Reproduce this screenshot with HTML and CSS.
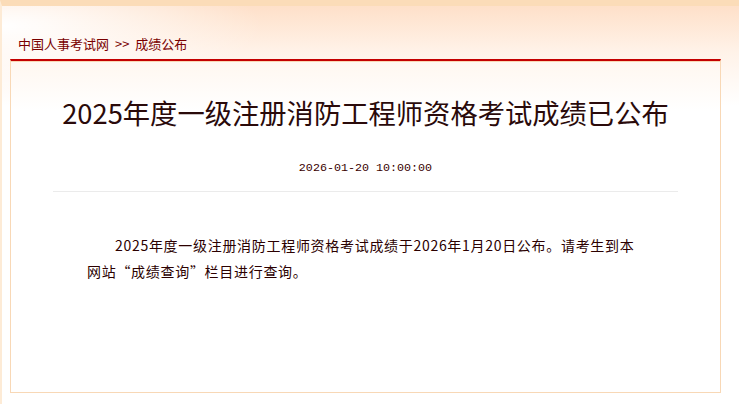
FILE: index.html
```html
<!DOCTYPE html>
<html lang="zh-CN">
<head>
    <meta charset="UTF-8">
    <meta name="viewport" content="width=device-width, initial-scale=1.0">
    <title>成绩公布 - 中国人事考试网</title>
    <link rel="stylesheet" href="styles.css">
</head>
<body>
    <div class="page">
        <div class="crumb">
            <a href="#">中国人事考试网</a>
            <span class="sep">&gt;&gt;</span>
            <a href="#">成绩公布</a>
        </div>

        <div class="box">
            <h1 class="title">2025年度一级注册消防工程师资格考试成绩已公布</h1>
            <div class="date">2026-01-20 10:00:00</div>

            <div class="content">
                <p>2025年度一级注册消防工程师资格考试成绩于2026年1月20日公布。请考生到本网站“成绩查询”栏目进行查询。</p>
            </div>
        </div>
    </div>
</body>
</html>
```

FILE: styles.css
```css
body {
    margin: 0;
    background: #fff;
    font-family: "Noto Sans CJK SC", "Liberation Sans", sans-serif;
    color: #2b0606;
}

.page {
    height: 398px;
    border-top: 6px solid #fbdcb8;
    border-left: 2px solid #fdebd6;
    padding: 0 18px 0 8px;
    background:
        radial-gradient(ellipse 260px 70px at 0 20px, #fff 0%, rgba(255, 255, 255, 0) 100%),
        linear-gradient(180deg, #fee0c9 0%, #fff2e8 45px, #fff 100px);
}

.crumb {
    padding: 28px 0 0 8px;
    height: 25px;
    font-size: 13px;
    line-height: 20px;
}

.crumb a {
    color: #7a0000;
    text-decoration: none;
}

.crumb .sep {
    color: #7a0000;
    margin: 0 3px;
}

.box {
    height: 334px;
    box-sizing: border-box;
    border: 1px solid #f8d8b6;
    border-top: 2px solid #c40000;
    box-shadow: inset 0 1px 0 #f8d8b6;
    background: linear-gradient(180deg, #fff7f0 0%, #fff 50px);
}

.title {
    margin: 0;
    padding-top: 31px;
    font-size: 27.3px;
    font-weight: normal;
    line-height: 40px;
    text-align: center;
    color: #2a0a0a;
}

.date {
    margin: 26px 42px 0;
    padding-bottom: 13px;
    border-bottom: 1px solid #ebebeb;
    font-family: "Liberation Mono", monospace;
    font-size: 11.7px;
    line-height: 20px;
    text-align: center;
    color: #3a0000;
}

.content {
    padding: 40px 76px 0;
}

.content p {
    margin: 0;
    font-size: 14px;
    line-height: 26px;
    letter-spacing: 0.7px;
    text-indent: 2em;
    color: #2b0000;
}
```
